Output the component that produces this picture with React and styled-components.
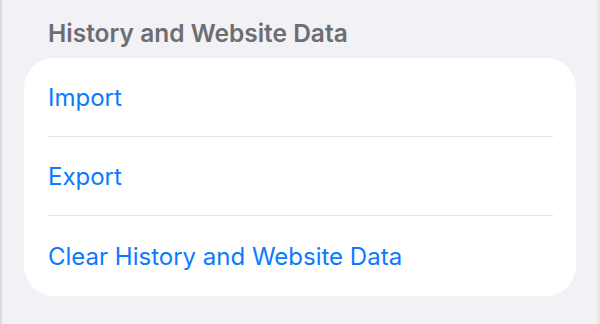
import React from "react";
import styled, { createGlobalStyle } from "styled-components";

const GlobalStyle = createGlobalStyle`
  html, body {
    margin: 0;
    padding: 0;
    background: #f1f1f6;
  }
  * { box-sizing: border-box; }
`;

const items = ["Import", "Export", "Clear History and Website Data"];

export default function App() {
  return (
    <>
      <GlobalStyle />
      <Page>
        <SectionTitle>History and Website Data</SectionTitle>
        <Card>
          {items.map((label, i) => (
            <Row key={label} last={i === items.length - 1}>
              <RowLabel>{label}</RowLabel>
            </Row>
          ))}
        </Card>
      </Page>
    </>
  );
}

const Page = styled.div`
  width: 600px;
  height: 324px;
  background: #f1f1f6;
  border-left: 2px solid #dcdce0;
  border-right: 3px solid #e6e6ea;
  padding: 19px 21px 0 22px;
  display: flex;
  flex-direction: column;
  font-family: Inter, "Noto Sans", sans-serif;
`;

const SectionTitle = styled.div`
  color: #6d6d72;
  font-size: 24.5px;
  font-weight: 600;
  line-height: 29px;
  padding-left: 24px;
  margin-bottom: 10px;
`;

const Card = styled.div`
  background: #fff;
  border-radius: 30px;
  padding-left: 24px;
  padding-right: 23px;
  display: flex;
  flex-direction: column;
`;

const Row = styled.div`
  height: ${({ last }) => (last ? "80px" : "79px")};
  display: flex;
  align-items: center;
  border-bottom: ${({ last }) => (last ? "none" : "1.5px solid #e3e3e6")};
`;

const RowLabel = styled.span`
  color: #0a7aff;
  font-size: 24px;
  font-weight: 400;
`;
